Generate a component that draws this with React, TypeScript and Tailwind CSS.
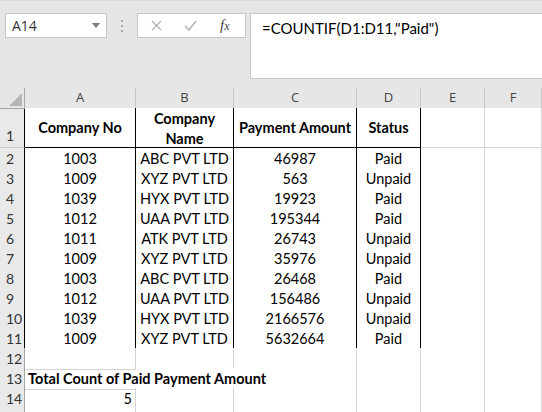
import React from 'react'

const COLS = ['A', 'B', 'C', 'D', 'E', 'F']
const ROWS: [string, string, string, string][] = [
  ['1003', 'ABC PVT LTD', '46987', 'Paid'],
  ['1009', 'XYZ PVT LTD', '563', 'Unpaid'],
  ['1039', 'HYX PVT LTD', '19923', 'Paid'],
  ['1012', 'UAA PVT LTD', '195344', 'Paid'],
  ['1011', 'ATK PVT LTD', '26743', 'Unpaid'],
  ['1009', 'XYZ PVT LTD', '35976', 'Unpaid'],
  ['1003', 'ABC PVT LTD', '26468', 'Paid'],
  ['1012', 'UAA PVT LTD', '156486', 'Unpaid'],
  ['1039', 'HYX PVT LTD', '2166576', 'Unpaid'],
  ['1009', 'XYZ PVT LTD', '5632664', 'Paid'],
]

const grid = 'grid grid-cols-[25px_111px_98px_123px_64px_64px_57px]'
const cellFont = { fontFamily: 'Lato, "Open Sans", sans-serif' }

function RowHead({ n, dark, tall }: { n?: number; dark?: boolean; tall?: boolean }) {
  return (
    <div
      className={`bg-[#e9e9e9] border-b border-b-[#c9c9c9] border-r ${dark ? 'border-r-black' : 'border-r-[#a6a6a6]'} flex ${tall ? 'items-end pb-[1px]' : 'items-center'} pl-[6px] text-[14px] text-[#333]`}
      style={cellFont}
    >
      {n}
    </div>
  )
}

function Cell({ children, table, bold, align = 'center', overflow, noRight }: {
  children?: React.ReactNode; table?: boolean; bold?: boolean; align?: 'center' | 'right' | 'left'; overflow?: boolean; noRight?: boolean
}) {
  const just = align === 'center' ? 'justify-center text-center' : align === 'right' ? 'justify-end pr-[3px]' : 'justify-start pl-[3px]'
  return (
    <div
      className={`flex items-center ${just} ${noRight ? '' : 'border-r'} border-b ${table ? 'border-black' : 'border-[#d4d4d4]'} text-[14.5px] leading-[20px] text-black ${bold ? 'font-bold' : ''} ${overflow ? 'overflow-visible whitespace-nowrap relative z-10' : 'overflow-hidden bg-white'}`}
      style={cellFont}
    >
      {children}
    </div>
  )
}

export default function App() {
  return (
    <div className="w-[542px] h-[412px] overflow-hidden bg-white select-none">
      {/* ribbon / formula bar */}
      <div className="h-[88px] bg-[#e6e6e6] border-t border-[#d9d9d9] flex items-start pt-[12px] pl-[5px]">
        <div className="w-[102px] h-[25px] bg-white border border-[#c6c6c6] flex items-center justify-between pl-[6px] pr-[6px]">
          <span className="text-[14px] text-[#333]" style={{ fontFamily: '"Open Sans", sans-serif' }}>A14</span>
          <svg width="8" height="5" viewBox="0 0 8 5"><path d="M0 0h8L4 5z" fill="#7a7a7a" /></svg>
        </div>
        <div className="w-[30px] h-[25px] flex flex-col items-center justify-center gap-[3px]">
          <span className="w-[2px] h-[2px] bg-[#aaa]" />
          <span className="w-[2px] h-[2px] bg-[#aaa]" />
          <span className="w-[2px] h-[2px] bg-[#aaa]" />
        </div>
        <div className="w-[109px] h-[25px] bg-white border border-[#c6c6c6] flex items-center">
          <svg className="ml-[13px]" width="11" height="11" viewBox="0 0 11 11">
            <path d="M1 1l9 9M10 1l-9 9" stroke="#b3b3b3" strokeWidth="1.3" />
          </svg>
          <svg className="ml-[22px]" width="13" height="11" viewBox="0 0 13 11">
            <path d="M1 6l4 4 7-9" stroke="#b3b3b3" strokeWidth="1.6" fill="none" />
          </svg>
          <span className="ml-[23px] text-[15px] italic text-[#444]" style={{ fontFamily: '"Liberation Serif", serif' }}>
            f<span className="text-[12px]">x</span>
          </span>
        </div>
        <div className="ml-[4px] flex-1 h-[66px] bg-white border border-[#c6c6c6] border-r-0 pl-[11px] pt-[3px] text-[15px] text-black" style={cellFont}>
          =COUNTIF(D1:D11,"Paid")
        </div>
      </div>

      {/* column headers */}
      <div className={`${grid} h-[20px]`}>
        <div className="bg-[#e6e6e6] border-b border-r border-[#a6a6a6] relative">
          <svg className="absolute left-[9px] top-[5px]" width="13" height="13" viewBox="0 0 13 13"><path d="M13 0v13H0z" fill="#b5b5b5" /></svg>
        </div>
        {COLS.map((c, i) => (
          <div
            key={c}
            className={`bg-[#e6e6e6] border-b ${i < 4 ? 'border-b-black' : 'border-b-[#a6a6a6]'} border-r border-r-[#c6c6c6] flex items-center justify-center text-[13px] text-[#444]`}
            style={{ fontFamily: '"Open Sans", sans-serif' }}
          >
            {c}
          </div>
        ))}
      </div>

      {/* row 1 */}
      <div className={`${grid} h-[40px]`}>
        <RowHead n={1} dark tall />
        <Cell table bold>Company No</Cell>
        <Cell table bold><span className="leading-[20px] pt-[2px]">Company<br />Name</span></Cell>
        <Cell table bold>Payment Amount</Cell>
        <Cell table bold>Status</Cell>
        <Cell />
        <Cell />
      </div>

      {ROWS.map((r, i) => (
        <div key={i} className={`${grid} h-[20px]`}>
          <RowHead n={i + 2} dark />
          {r.map((v, j) => <Cell key={j} table>{v}</Cell>)}
          <Cell />
          <Cell />
        </div>
      ))}

      <div className={`${grid} h-[20px]`}>
        <RowHead n={12} />
        <Cell /><Cell /><Cell /><Cell /><Cell /><Cell />
      </div>
      <div className={`${grid} h-[20px]`}>
        <RowHead n={13} />
        <Cell bold align="left" overflow noRight>Total Count of Paid Payment Amount</Cell>
        <Cell noRight />
        <Cell /><Cell /><Cell /><Cell />
      </div>
      <div className={`${grid} h-[20px]`}>
        <RowHead n={14} />
        <Cell align="right">5</Cell>
        <Cell /><Cell /><Cell /><Cell /><Cell />
      </div>
      <div className={`${grid} h-[20px]`}>
        <RowHead />
        <Cell /><Cell /><Cell /><Cell /><Cell /><Cell />
      </div>
    </div>
  )
}
